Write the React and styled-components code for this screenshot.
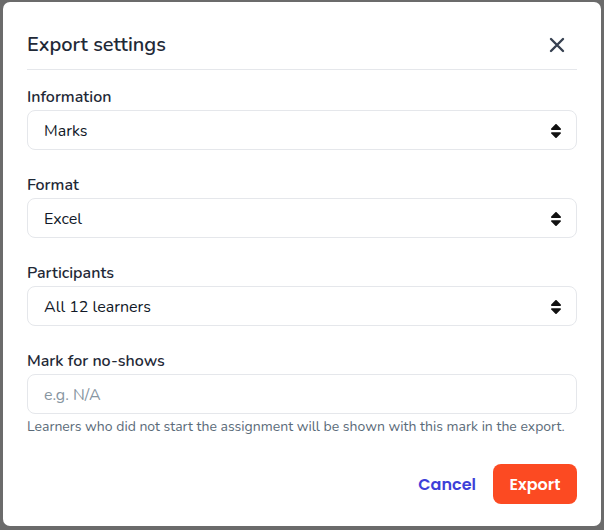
import styled, { createGlobalStyle } from "styled-components";
import { FaSort } from "react-icons/fa";

const GlobalStyle = createGlobalStyle`
  html, body {
    margin: 0;
    padding: 0;
    background: #6b6b6b;
  }
  body {
    font-family: "Nunito", "Lato", "Noto Sans", sans-serif;
  }
`;

const fields = [
  { label: "Information", value: "Marks" },
  { label: "Format", value: "Excel" },
  { label: "Participants", value: "All 12 learners" },
];

export default function App() {
  return (
    <>
      <GlobalStyle />
      <Backdrop>
        <Dialog>
          <Header>
            <Title>Export settings</Title>
            <CloseButton aria-label="Close">
              <svg width="16" height="16" viewBox="0 0 16 16">
                <path
                  d="M2 2 L14 14 M14 2 L2 14"
                  stroke="#374151"
                  strokeWidth="2.4"
                  strokeLinecap="round"
                />
              </svg>
            </CloseButton>
          </Header>
          <Body>
            {fields.map((f) => (
              <Field key={f.label}>
                <Label>{f.label}</Label>
                <Select>
                  <span>{f.value}</span>
                  <FaSort size={18} color="#111" />
                </Select>
              </Field>
            ))}
            <Field>
              <Label>Mark for no-shows</Label>
              <Input placeholder="e.g. N/A" />
              <Hint>
                Learners who did not start the assignment will be shown with
                this mark in the export.
              </Hint>
            </Field>
          </Body>
          <Footer>
            <CancelButton>Cancel</CancelButton>
            <ExportButton>Export</ExportButton>
          </Footer>
        </Dialog>
      </Backdrop>
    </>
  );
}

const Backdrop = styled.div`
  width: 604px;
  height: 530px;
  box-sizing: border-box;
  padding: 2px 3px 4px 3px;
`;

const Dialog = styled.div`
  height: 100%;
  box-sizing: border-box;
  background: #fff;
  border-radius: 7px;
  padding: 0 24px;
  display: flex;
  flex-direction: column;
`;

const Header = styled.div`
  display: flex;
  align-items: center;
  justify-content: space-between;
  padding: 29px 0 10px;
  border-bottom: 1px solid #e5e7eb;
`;

const Title = styled.h2`
  margin: 0;
  font-size: 20px;
  line-height: 28px;
  font-weight: 600;
  color: #1f2937;
`;

const CloseButton = styled.button`
  border: none;
  background: none;
  padding: 0;
  margin-right: 12px;
  width: 16px;
  height: 16px;
  display: flex;
  cursor: pointer;
`;

const Body = styled.div`
  display: flex;
  flex-direction: column;
  gap: 25px;
  padding-top: 17px;
`;

const Field = styled.div`
  display: flex;
  flex-direction: column;
`;

const Label = styled.label`
  font-size: 16px;
  line-height: 21px;
  font-weight: 600;
  color: #1f2937;
  margin-bottom: 2px;
`;

const Select = styled.div`
  height: 40px;
  box-sizing: border-box;
  border: 1px solid #e5e7eb;
  border-radius: 8px;
  padding: 1px 11px 0 16px;
  display: flex;
  align-items: center;
  justify-content: space-between;
  font-size: 16px;
  color: #111827;
`;

const Input = styled.input`
  height: 40px;
  box-sizing: border-box;
  border: 1px solid #e5e7eb;
  border-radius: 8px;
  padding: 1px 16px 0;
  font-family: inherit;
  font-size: 16px;
  outline: none;
  &::placeholder {
    color: #8795a1;
  }
`;

const Hint = styled.p`
  margin: 4px 0 0;
  font-size: 14px;
  line-height: 18px;
  color: #5b6b79;
`;

const Footer = styled.div`
  margin-top: auto;
  padding-bottom: 22px;
  display: flex;
  justify-content: flex-end;
  align-items: center;
  gap: 17px;
`;

const ButtonBase = styled.button`
  font-family: "Poppins", "Inter", sans-serif;
  font-size: 16px;
  font-weight: 600;
  border: none;
  height: 40px;
  border-radius: 8px;
  cursor: pointer;
`;

const CancelButton = styled(ButtonBase)`
  background: none;
  color: #3d3fd9;
  padding: 0;
`;

const ExportButton = styled(ButtonBase)`
  background: #fc4a22;
  color: #fff;
  width: 84px;
`;
